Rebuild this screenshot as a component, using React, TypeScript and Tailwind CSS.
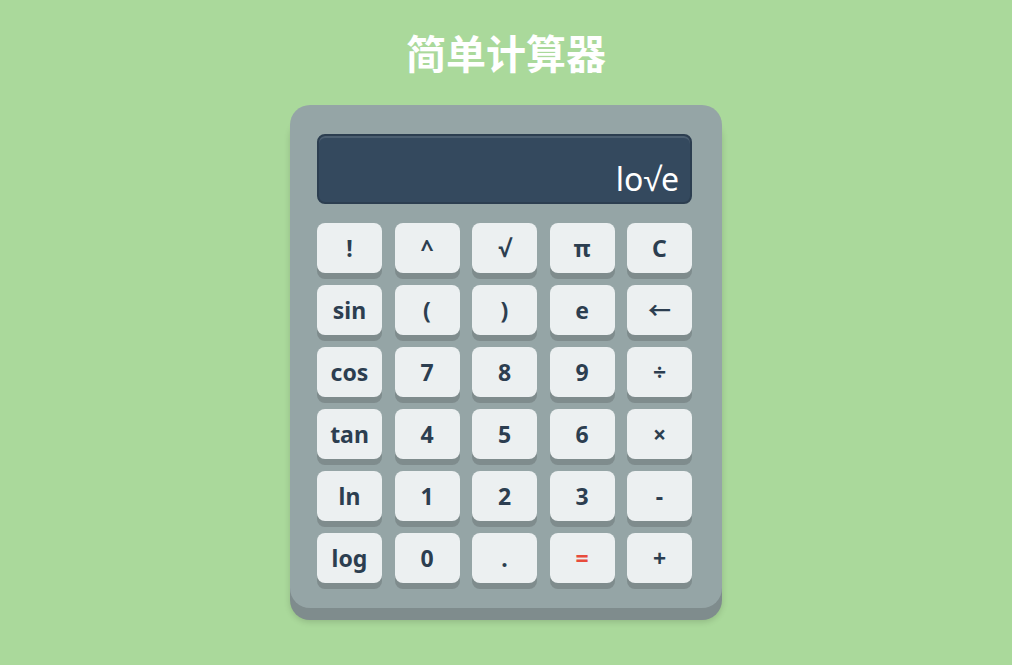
const keys = [
  "!", "^", "√", "π", "C",
  "sin", "(", ")", "e", "←",
  "cos", "7", "8", "9", "÷",
  "tan", "4", "5", "6", "×",
  "ln", "1", "2", "3", "-",
  "log", "0", ".", "=", "+",
];

export default function App() {
  return (
    <div
      className="min-h-[665px] w-full bg-[#aad99b] flex flex-col items-center pt-[28px]"
      style={{ fontFamily: '"Noto Sans", "Open Sans", "Noto Sans CJK SC", sans-serif' }}
    >
      <h1 className="text-[40px] leading-[52px] font-bold text-white">简单计算器</h1>

      <div className="mt-[25px] w-[432px] rounded-[20px] bg-[#95a5a6] pl-[27px] pr-[30px] pt-[29px] pb-[25px] shadow-[0_12px_0_#7f8c8d,0_14px_6px_rgba(0,0,0,0.15)]">
        {/* 显示屏 */}
        <div className="h-[70px] rounded-[8px] bg-[#34495e] border-2 border-[#2c3e50] shadow-[inset_0_2px_0_rgba(255,255,255,0.12)] flex items-end justify-end px-[11px] pb-[1px]">
          <span className="text-white text-[32px] leading-[44px]">lo√e</span>
        </div>

        <div className="mt-[19px] grid grid-cols-5 gap-x-[12.5px] gap-y-[12px]">
          {keys.map((k) => (
            <button
              key={k}
              className={
                "h-[50px] rounded-[8px] bg-[#ecf0f1] shadow-[0_6px_0_#7f8c8d] flex items-center justify-center text-[23px] font-bold " +
                (k === "=" ? "text-[#e74c3c]" : "text-[#2c3e50]")
              }
            >
              {k}
            </button>
          ))}
        </div>
      </div>
    </div>
  );
}
